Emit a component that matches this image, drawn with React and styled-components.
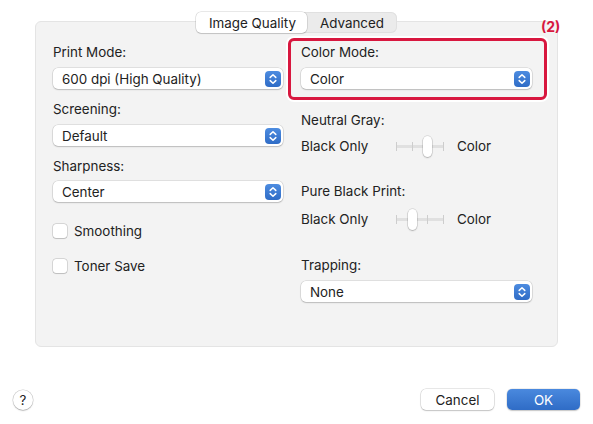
import React from "react";
import styled, { createGlobalStyle } from "styled-components";

const FS = "13.4px";

const Global = createGlobalStyle`
  html, body { margin: 0; padding: 0; background: #ffffff; }
  body { font-family: Inter, "Liberation Sans", Arial, sans-serif; font-size: ${FS}; color: #222222; }
  * { box-sizing: border-box; }
`;

const Window = styled.div`
  position: relative;
  width: 593px;
  height: 424px;
  padding-top: 12px;
  display: flex;
  flex-direction: column;
  background: #ffffff;
  overflow: hidden;
`;

const TabBar = styled.div`
  position: relative;
  z-index: 1;
  align-self: center;
  display: flex;
  height: 21px;
  border-radius: 6px;
  background: #ebebeb;
  box-shadow: inset 0 0 0 1px #e0e0e0;
`;

const Tab = styled.div`
  display: flex;
  align-items: center;
  padding: 0 ${(p) => (p.$active ? 11 : 13)}px 0 13px;
  border-radius: 5px;
  font-size: ${FS};
  line-height: 16px;
  color: #222222;
  background: ${(p) => (p.$active ? "#ffffff" : "transparent")};
  box-shadow: ${(p) =>
    p.$active ? "0 0 0 0.5px rgba(0,0,0,0.18), 0 1px 1px rgba(0,0,0,0.12)" : "none"};
`;

const Panel = styled.div`
  margin: -12px 35px 0 35px;
  height: 326px;
  background: #f3f3f3;
  border: 1px solid #e4e4e4;
  border-radius: 6px;
  padding: 22px 25px 0 17px;
  display: grid;
  grid-template-columns: 230px 231px;
  column-gap: 18px;
  align-items: start;
`;

const Column = styled.div`
  display: flex;
  flex-direction: column;
`;

const Label = styled.div`
  font-size: ${FS};
  line-height: 16px;
  height: 16px;
  white-space: nowrap;
  margin-top: ${(p) => p.$mt || 0}px;
`;

const SelectBox = styled.div`
  height: 21px;
  margin-top: ${(p) => p.$mt ?? 8}px;
  background: #ffffff;
  border-radius: 5px;
  box-shadow: 0 0 0 0.5px rgba(0, 0, 0, 0.16), 0 1px 1.5px rgba(0, 0, 0, 0.16);
  display: flex;
  align-items: center;
  justify-content: space-between;
  padding: 0 2px 0 9px;
  font-size: ${FS};
  line-height: 16px;
`;

const Arrows = styled.div`
  width: 16px;
  height: 16px;
  border-radius: 4px;
  background: linear-gradient(#4d8ce0, #2f6cc6);
  display: flex;
  align-items: center;
  justify-content: center;
`;

const Select = ({ value, mt }) => (
  <SelectBox $mt={mt}>
    <span>{value}</span>
    <Arrows>
      <svg width="8" height="12" viewBox="0 0 8 12">
        <path d="M1.2 4.4 L4 1.7 L6.8 4.4" fill="none" stroke="#fff" strokeWidth="1.5" strokeLinecap="round" strokeLinejoin="round" />
        <path d="M1.2 7.6 L4 10.3 L6.8 7.6" fill="none" stroke="#fff" strokeWidth="1.5" strokeLinecap="round" strokeLinejoin="round" />
      </svg>
    </Arrows>
  </SelectBox>
);

const CheckRow = styled.div`
  display: flex;
  align-items: center;
  height: 16px;
  margin-top: ${(p) => p.$mt}px;
  gap: 7px;
  font-size: ${FS};
  line-height: 16px;
`;

const Box = styled.div`
  width: 14px;
  height: 14px;
  border-radius: 3px;
  background: #ffffff;
  box-shadow: 0 0 0 0.5px rgba(0, 0, 0, 0.22), 0 0.5px 1px rgba(0, 0, 0, 0.12);
`;

const SliderRow = styled.div`
  display: flex;
  align-items: center;
  height: 22px;
  margin-top: ${(p) => p.$mt}px;
  font-size: ${FS};
  line-height: 16px;
`;

const SliderLabel = styled.span`
  width: 95px;
`;

const Track = styled.div`
  position: relative;
  width: 48px;
  height: 22px;
  margin-right: 13px;
`;

const TrackLine = styled.div`
  position: absolute;
  left: 0;
  right: 0;
  top: 10px;
  height: 3px;
  background: #e0e0e0;
  border-radius: 1px;
`;

const Tick = styled.div`
  position: absolute;
  top: 7px;
  width: 1px;
  height: 9px;
  background: #cdcdcd;
`;

const Thumb = styled.div`
  position: absolute;
  top: 1px;
  width: 9px;
  height: 21px;
  margin-left: -4px;
  border-radius: 5px;
  background: #ffffff;
  box-shadow: 0 0 0 0.5px rgba(0, 0, 0, 0.18), 0 1px 1.5px rgba(0, 0, 0, 0.2);
`;

const Slider = ({ pos }) => {
  const ticks = [0, 1, 2, 3];
  const x = (i) => Math.round((i * 47) / 3);
  return (
    <Track>
      <TrackLine />
      {ticks.map((i) => (
        <Tick key={i} style={{ left: x(i) }} />
      ))}
      <Thumb style={{ left: x(pos) }} />
    </Track>
  );
};

const Highlight = styled.div`
  position: absolute;
  left: 288px;
  top: 38px;
  width: 259px;
  height: 62px;
  border: 3px solid #d8173f;
  border-radius: 6px;
  box-shadow: 0 0 0 2px #ffffff;
  pointer-events: none;
`;

const Callout = styled.div`
  position: absolute;
  left: 541px;
  top: 19px;
  font-size: 14px;
  line-height: 16px;
  font-weight: 700;
  color: #d8173f;
`;

const Footer = styled.div`
  display: flex;
  align-items: center;
  margin-top: 42px;
  padding: 0 13px 0 13px;
  gap: 13px;
`;

const Help = styled.div`
  width: 20px;
  height: 20px;
  border-radius: 50%;
  background: #ffffff;
  box-shadow: 0 0 0 0.5px rgba(0, 0, 0, 0.2), 0 1px 1.5px rgba(0, 0, 0, 0.18);
  display: flex;
  align-items: center;
  justify-content: center;
  font-size: ${FS};
  margin-right: auto;
`;

const Button = styled.div`
  width: 73px;
  height: 21px;
  border-radius: 5px;
  display: flex;
  align-items: center;
  justify-content: center;
  font-size: ${FS};
  line-height: 16px;
  color: ${(p) => (p.$primary ? "#ffffff" : "#222222")};
  background: ${(p) => (p.$primary ? "linear-gradient(#4a89de, #2f6cc6)" : "#ffffff")};
  box-shadow: ${(p) =>
    p.$primary
      ? "0 0 0 0.5px rgba(0,0,0,0.12), 0 1px 1.5px rgba(0,0,0,0.18)"
      : "0 0 0 0.5px rgba(0,0,0,0.18), 0 1px 1.5px rgba(0,0,0,0.16)"};
`;

export default function App() {
  return (
    <>
      <Global />
      <Window>
        <TabBar>
          <Tab $active>Image Quality</Tab>
          <Tab>Advanced</Tab>
        </TabBar>
        <Panel>
          <Column>
            <Label>Print Mode:</Label>
            <Select value="600 dpi (High Quality)" />
            <Label $mt={12}>Screening:</Label>
            <Select value="Default" />
            <Label $mt={12}>Sharpness:</Label>
            <Select value="Center" mt={7} />
            <CheckRow $mt={21}>
              <Box />
              <span>Smoothing</span>
            </CheckRow>
            <CheckRow $mt={19}>
              <Box />
              <span>Toner Save</span>
            </CheckRow>
          </Column>
          <Column>
            <Label>Color Mode:</Label>
            <Select value="Color" />
            <Label $mt={23}>Neutral Gray:</Label>
            <SliderRow $mt={7}>
              <SliderLabel>Black Only</SliderLabel>
              <Slider pos={2} />
              <span>Color</span>
            </SliderRow>
            <Label $mt={26}>Pure Black Print:</Label>
            <SliderRow $mt={9}>
              <SliderLabel>Black Only</SliderLabel>
              <Slider pos={1} />
              <span>Color</span>
            </SliderRow>
            <Label $mt={27}>Trapping:</Label>
            <Select value="None" />
          </Column>
        </Panel>
        <Footer>
          <Help>?</Help>
          <Button>Cancel</Button>
          <Button $primary>OK</Button>
        </Footer>
        <Highlight />
        <Callout>(2)</Callout>
      </Window>
    </>
  );
}
